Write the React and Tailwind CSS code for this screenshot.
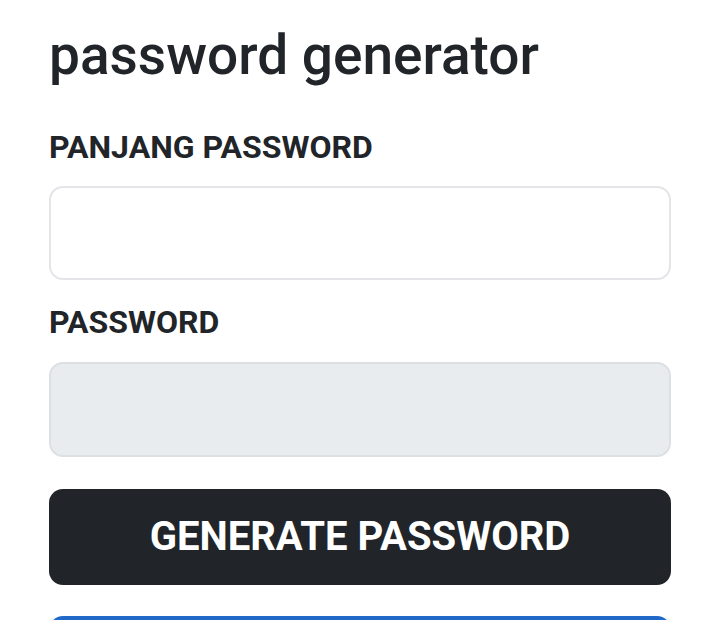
export default function App() {
  return (
    <div className="h-[620px] w-[720px] bg-white overflow-hidden" style={{ fontFamily: 'Roboto, "Noto Sans", sans-serif' }}>
      <div className="flex flex-col px-[49px] pt-[27px]">
        <h1 className="text-[55px] leading-[56px] text-[#212529] font-medium">password generator</h1>
        <label className="mt-[48px] text-[32px] leading-[32px] font-bold text-[#212529]">PANJANG PASSWORD</label>
        <input className="mt-[23px] h-[94px] w-full rounded-[14px] border-2 border-[#e3e5e8] bg-white" />
        <label className="mt-[26px] text-[32px] leading-[32px] font-bold text-[#212529]">PASSWORD</label>
        <input disabled className="mt-[24px] h-[95px] w-full rounded-[14px] border-2 border-[#dde0e3] bg-[#e9ecef]" />
        <button className="mt-[32px] h-[96px] w-full shrink-0 rounded-[14px] bg-[#212529] text-white text-[40px] font-bold">GENERATE PASSWORD</button>
        <button className="mt-[31px] h-[96px] w-full shrink-0 rounded-[14px] bg-[#2268c8]"></button>
      </div>
    </div>
  );
}
